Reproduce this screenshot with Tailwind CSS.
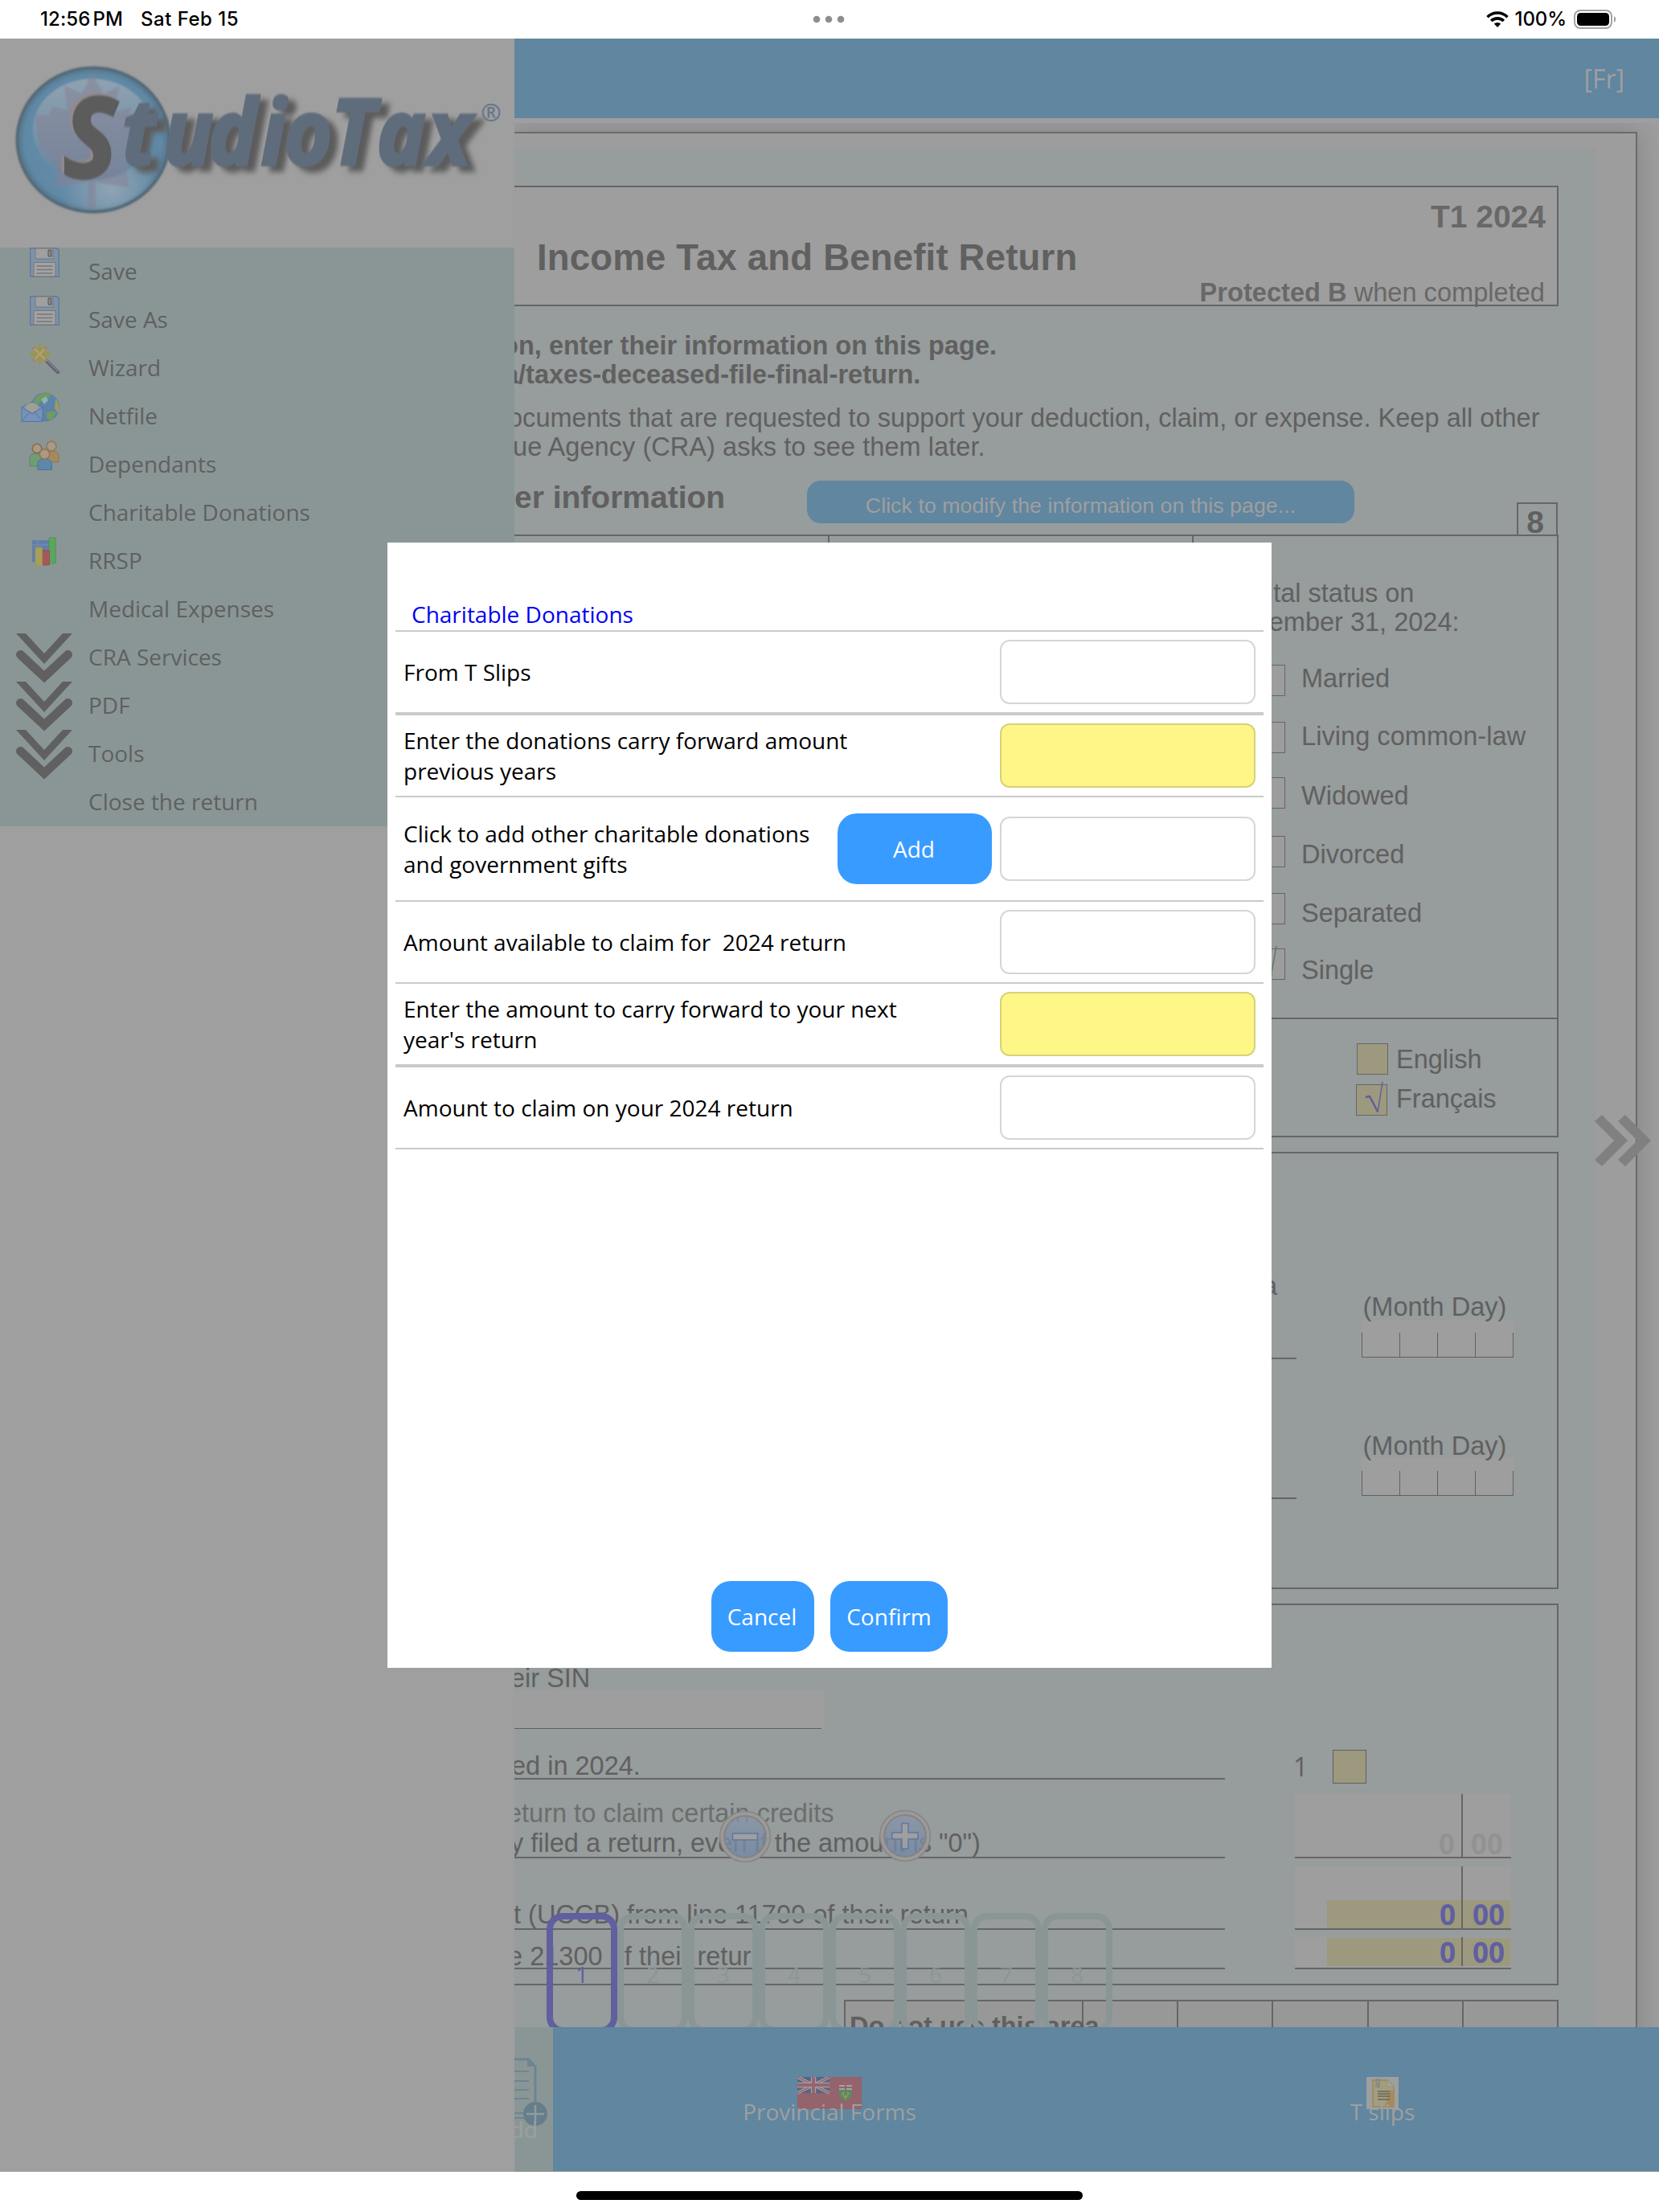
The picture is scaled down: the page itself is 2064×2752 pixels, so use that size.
<!DOCTYPE html>
<html lang="en">
<head>
    <meta charset="UTF-8">
    <title>StudioTax</title>
    <script src="https://cdn.jsdelivr.net/npm/@tailwindcss/browser@4"></script>
</head>
<body class="w-[2064px] h-[2752px] overflow-hidden bg-white relative flex flex-col font-['Open_Sans','Noto_Sans',sans-serif] text-[28px] leading-[38px] text-[#606060]">

<!-- Status bar -->
<header class="h-12 shrink-0 flex items-center justify-between pl-[50px] pr-[53px] text-black font-['Inter',sans-serif] font-medium text-[24px] leading-[30px]">
    <div class="flex w-[600px] gap-[22px] whitespace-nowrap">
        <span class="tracking-[0.1px]">12:56<span class="ml-[3px]">PM</span></span>
        <span class="tracking-[0.5px]">Sat Feb 15</span>
    </div>
    <svg class="w-[42px] h-[10px]" viewBox="0 0 42 10" fill="#8e8e8e"><circle cx="6" cy="5" r="4.3"/><circle cx="21" cy="5" r="4.3"/><circle cx="36" cy="5" r="4.3"/></svg>
    <div class="flex w-[600px] justify-end items-center">
        <svg class="w-[28px] h-[20px] mr-2" viewBox="0 0 28 20">
            <g fill="none" stroke="#000" stroke-width="3.6"><path d="M1.5 7.2a17.8 17.8 0 0 1 25 0"/><path d="M6.2 12a11.2 11.2 0 0 1 15.6 0"/></g>
            <path d="M14 20l-4.2-4.4a6 6 0 0 1 8.400 0z"/>
        </svg>
        <span class="tracking-[-0.1px]">100%</span>
        <svg class="w-[53px] h-[24px] ml-[9px]" viewBox="0 0 53 24">
            <rect x="1" y="1" width="46" height="22" rx="7" fill="none" stroke="#a3a3a3" stroke-width="2"/>
            <rect x="4" y="4" width="40" height="16" rx="4.500" fill="#000"/>
            <path d="M50 8v8c3-1.500 3-6.500 0-8z" fill="#a3a3a3"/>
        </svg>
    </div>
</header>

<div class="h-[2654px] shrink-0 flex">

    <!-- Side menu -->
    <aside class="w-[640px] shrink-0 bg-[#9f9f9f]">
        <svg class="block w-[640px] h-[260px]" viewBox="0 0 640 260">
            <defs>
                <radialGradient id="ball" cx=".5" cy=".5" r=".5"><stop offset="0" stop-color="#6d90a8"/><stop offset=".9" stop-color="#5f89a6"/><stop offset=".97" stop-color="#587990"/><stop offset="1" stop-color="#4f6472"/></radialGradient>
                <radialGradient id="glow" cx=".62" cy=".85" r=".35"><stop offset="0" stop-color="#90a3b3"/><stop offset="1" stop-color="#90a3b3" stop-opacity="0"/></radialGradient>
                <linearGradient id="shine" x1="0" y1="0" x2="0" y2="1"><stop offset="0" stop-color="#90a2b1"/><stop offset="1" stop-color="#6587a0"/></linearGradient>
                <filter id="soft" x="-10%" y="-20%" width="120%" height="150%"><feGaussianBlur stdDeviation="3.5"/></filter>
                <filter id="edge"><feGaussianBlur stdDeviation="0.8"/></filter>
            </defs>
            <g filter="url(#edge)">
                <ellipse cx="116" cy="126" rx="95" ry="90" fill="url(#ball)" stroke="#526673" stroke-width="3"/>
                <ellipse cx="116" cy="126" rx="92" ry="87" fill="url(#glow)"/>
                <ellipse cx="115" cy="113" rx="74" ry="63" fill="url(#shine)"/>
                <path d="M114 42l15 27 19-10-5 33 20-7-3 22 22 0-2 32-23 16 3 30-41-6v33h-10v-33l-42 6 4-26-22-24-6-40 18 0 5-11 18 6-4-32 22 11z" fill="#857f93" opacity=".5"/>
            </g>
            <g font-family="Open Sans, sans-serif" font-weight="700" font-style="italic" transform="scale(.9 1)">
                <text x="180 237 299 372 404 469 532 602" y="164" font-size="113" fill="#5c5c5c" stroke="#5c5c5c" stroke-width="4" filter="url(#soft)">tudioTax</text>
                <g filter="url(#edge)">
                    <text x="169 226 288 361 393 458 521 591" y="157" font-size="113" fill="#5f6c7c" stroke="#5f6c7c" stroke-width="4">tudioTax</text>
                    <text x="84" y="170" font-size="138" fill="#93898a" stroke="#93898a" stroke-width="3">S</text>
                    <text x="88" y="173" font-size="138" fill="#5b5b5b" stroke="#5b5b5b" stroke-width="4">S</text>
                </g>
            </g>
            <text x="598" y="103" font-family="Open Sans, sans-serif" font-size="31" font-weight="700" fill="#69788a">®</text>
        </svg>
        <nav class="bg-[#8a9696]">
            <ul>
                <li class="h-[60px] flex">
                    <div class="w-[110px] h-[60px] pl-[37px] shrink-0">
                        <svg class="w-[37px] h-[37px]" viewBox="0 0 37 37"><path d="M.7.7h33L36.300 3v33.300H.7z" fill="#7d93aa" stroke="#627a96" stroke-width="1.400"/><path d="M7 1h22v13H7z" fill="#a0a0a0" stroke="#777"/><path d="M23 3h4v8h-4z" fill="#868686" stroke="#555"/><path d="M5 18.500h27V36H5z" fill="#a3a3a3" stroke="#777"/><path d="M8.500 23h20M8.500 27.500h20M8.500 32h20" stroke="#777" stroke-width="1.400"/></svg>
                    </div><span class="pt-[10px]">Save</span>
                </li>
                <li class="h-[60px] flex">
                    <div class="w-[110px] h-[60px] pl-[37px] shrink-0">
                        <svg class="w-[37px] h-[37px]" viewBox="0 0 37 37"><path d="M.7.7h33L36.300 3v33.300H.7z" fill="#7d93aa" stroke="#627a96" stroke-width="1.400"/><path d="M7 1h22v13H7z" fill="#a0a0a0" stroke="#777"/><path d="M23 3h4v8h-4z" fill="#868686" stroke="#555"/><path d="M5 18.500h27V36H5z" fill="#a3a3a3" stroke="#777"/><path d="M8.500 23h20M8.500 27.500h20M8.500 32h20" stroke="#777" stroke-width="1.400"/></svg>
                    </div><span class="pt-[10px]">Save As</span>
                </li>
                <li class="h-[60px] flex">
                    <div class="w-[110px] h-[60px] pl-[37px] shrink-0">
                        <svg class="w-[37px] h-[37px]" viewBox="0 0 37 37" stroke-linecap="round"><path d="M19 19l16 16" stroke="#5f5f6c" stroke-width="4.500"/><path d="M20 19l15 15" stroke="#8a7f9a" stroke-width="1.500"/><path d="M12.500 2v22M2 12.500h22" stroke="#98974a" stroke-width="4"/><path d="M5.500 5.500l14 14M19.500 5.500l-14 14" stroke="#a58a52" stroke-width="5"/><path d="M7 7l11 11M18 7L7 18" stroke="#aaa26e" stroke-width="3"/></svg>
                    </div><span class="pt-[10px]">Wizard</span>
                </li>
                <li class="h-[60px] flex">
                    <div class="w-[110px] h-[60px] pl-[26px] shrink-0">
                        <svg class="w-[48px] h-[37px]" viewBox="0 0 48 37"><circle cx="30" cy="18.500" r="18" fill="#5c83a8"/><path d="M17 8C22 1 33-1 38 2l-4 6-8 1-5 8-6 1zM32 25l9-2 3 3-7 10-5-4z" fill="#6f9a62"/><path d="M43 8q7 8 3 18l-4-6z" fill="#9d9a5c"/><path d="M25 9l6-4 3 5-5 5z" fill="#8fb0b8"/><path d="M1 18.500l13-6.500 13 6.500V36.500H1z" fill="#7593b8" stroke="#5673a0"/><path d="M6 17q8-8 16 0v4l-8 4-8-4z" fill="#a09f94"/><path d="M1 36l10-11M27 36L17 25M1 18.500L14 27l13-8.500" fill="none" stroke="#5673a0"/></svg>
                    </div><span class="pt-[10px]">Netfile</span>
                </li>
                <li class="h-[60px] flex">
                    <div class="w-[110px] h-[60px] pl-[36px] shrink-0">
                        <svg class="w-[38px] h-[37px]" viewBox="0 0 38 37"><path d="M22 27V17q1-4 6-4 9 0 9 6v8z" fill="#a28a5f" stroke="#92784c"/><circle cx="28" cy="7" r="6" fill="#a89a85" stroke="#917555" stroke-width="1.500"/><path d="M1 32V22q0-5 7-6 8 0 9 6v10z" fill="#6f9c73" stroke="#5b8a60"/><circle cx="10" cy="10" r="5.700" fill="#a89a85" stroke="#8a6a45" stroke-width="1.500"/><path d="M11 36.500V29q0-6 8.500-6t9 6v7.500z" fill="#5f86ab" stroke="#4d729a"/><circle cx="19.500" cy="17" r="6.200" fill="#a89a85" stroke="#917555" stroke-width="1.500"/></svg>
                    </div><span class="pt-[10px]">Dependants</span>
                </li>
                <li class="h-[60px] pt-[10px] pl-[110px]">Charitable Donations</li>
                <li class="h-[60px] flex">
                    <div class="w-[110px] h-[60px] pl-[40px] shrink-0">
                        <svg class="w-[30px] h-[36px]" viewBox="0 0 30 36"><path d="M0 4h21v30L0 31z" fill="#617fa6"/><path d="M0 10h20M7 4v28" stroke="#7692b4"/><rect x="21" y="1" width="8.500" height="32" rx="1" fill="#5ba561" stroke="#519457"/><rect x="12.500" y="17" width="9" height="18" rx="1" fill="#a5585c" stroke="#965055"/><rect x="4" y="13" width="8.500" height="23" rx="1" fill="#a7a05c" stroke="#999150"/></svg>
                    </div><span class="pt-[10px]">RRSP</span>
                </li>
                <li class="h-[60px] pt-[10px] pl-[110px]">Medical Expenses</li>
                <li class="h-[60px] flex">
                    <div class="w-[110px] h-[60px] pl-5 shrink-0">
                        <svg class="w-[70px] h-[63px]" viewBox="0 0 70 63"><path d="M0 0h12l23 25L58 0h12L35 38z" fill="#606060"/><path d="M5.500 26.500L35 54l29.500-27.500" fill="none" stroke="#606060" stroke-width="11" stroke-linecap="round"/></svg>
                    </div><span class="pt-[10px]">CRA Services</span>
                </li>
                <li class="h-[60px] flex">
                    <div class="w-[110px] h-[60px] pl-5 shrink-0">
                        <svg class="w-[70px] h-[63px]" viewBox="0 0 70 63"><path d="M0 0h12l23 25L58 0h12L35 38z" fill="#606060"/><path d="M5.500 26.500L35 54l29.500-27.500" fill="none" stroke="#606060" stroke-width="11" stroke-linecap="round"/></svg>
                    </div><span class="pt-[10px]">PDF</span>
                </li>
                <li class="h-[60px] flex">
                    <div class="w-[110px] h-[60px] pl-5 shrink-0">
                        <svg class="w-[70px] h-[63px]" viewBox="0 0 70 63"><path d="M0 0h12l23 25L58 0h12L35 38z" fill="#606060"/><path d="M5.500 26.500L35 54l29.500-27.500" fill="none" stroke="#606060" stroke-width="11" stroke-linecap="round"/></svg>
                    </div><span class="pt-[10px]">Tools</span>
                </li>
                <li class="h-[60px] pt-[10px] pl-[110px]">Close the return</li>
            </ul>
        </nav>
    </aside>

    <!-- Return -->
    <main class="w-[1424px] shrink-0 flex flex-col relative bg-[#9f9f9f] overflow-hidden">
        <div class="h-[99px] shrink-0 bg-[#6086a0] flex items-center justify-end pr-[43px] text-[32px] text-[#9f9f9f]">[Fr]</div>
        <div class="h-[6px] shrink-0"></div>

        <div class="h-[2369px] shrink-0 overflow-hidden pt-[11px]">
            <div class="w-[1397px] h-[2500px] pt-[19px] bg-[#9d9d9d] border-t-2 border-r-2 border-[#6a6a6a] shadow-[0_0_34px_6px_rgba(0,0,0,0.14)]">
                <div class="w-[1345px] h-[2480px] pt-[46px] bg-[#979c9c] font-['Liberation_Sans',sans-serif] text-[32.5px] leading-[36px] whitespace-nowrap">

                    <!-- Title box -->
                    <div class="w-[1299px] h-[150px] bg-[#9e9e9e] border-y-2 border-r-2 border-[#666]">
                        <p class="pt-[15px] pr-[14px] text-right font-bold text-[39px] leading-[44px] text-[#686868]">T1 2024</p>
                        <h1 class="pt-[4px] pl-[28px] font-bold text-[45.5px] leading-[50px] tracking-[0.2px]">Income Tax and Benefit Return</h1>
                        <p class="pr-[15px] text-right text-[#686868] tracking-[0.05px]"><b>Protected B</b> when completed</p>
                    </div>

                    <p class="mt-[31px] -ml-[15px] font-bold tracking-[0.03px]">on, enter their information on this page.</p>
                    <p class="-ml-[13px] font-bold">a/taxes-deceased-file-final-return.</p>
                    <p class="mt-[18px] -ml-[8px] tracking-[0.03px]">ocuments that are requested to support your deduction, claim, or expense. Keep all other</p>
                    <p class="-ml-[2px] tracking-[0.06px]">ue Agency (CRA) asks to see them later.</p>

                    <div class="h-[69px] mt-[22px] flex items-start">
                        <h2 class="w-[364px] pt-px font-bold text-[39px] leading-[44px]">er information</h2>
                        <div class="w-[681px] h-[53px] mt-[2px] rounded-[17px] bg-[#6086a0] text-center text-[26.7px] leading-[62px] tracking-[0.06px] text-[#9f9f9f]">Click to modify the information on this page...</div>
                        <div class="w-[51px] h-[40px] ml-[202px] mt-[29px] pr-[5px] border-2 border-b-0 border-[#666] text-center font-bold text-[39px] leading-[46px]">8</div>
                    </div>

                    <!-- Marital status and language -->
                    <div class="w-[1299px] h-[750px] border-y-2 border-r-2 border-[#666]">
                        <div class="h-[601px] flex border-b-2 border-[#666]">
                            <div class="w-[392px] border-r-2 border-[#666]"></div>
                            <div class="w-[453px] border-r-2 border-[#666]"></div>
                            <div class="pt-[53px] pl-[36px]">
                                <p>Marital status on</p>
                                <p>December 31, 2024:</p>
                                <div class="mt-[35px] ml-[39px]">
                                    <div class="flex h-[71px]"><span class="w-[39px] h-[39px] mr-[20px] border border-[#666] bg-[#9d9d9d]"></span><span class="-mt-px">Married</span></div>
                                    <div class="flex h-[69px]"><span class="w-[39px] h-[39px] mr-[20px] border border-[#666] bg-[#9d9d9d]"></span><span class="tracking-[0.06px]">Living common-law</span></div>
                                    <div class="flex h-[73px]"><span class="w-[39px] h-[39px] mr-[20px] border border-[#666] bg-[#9d9d9d]"></span><span class="pt-[5px]">Widowed</span></div>
                                    <div class="flex h-[71px]"><span class="w-[39px] h-[39px] mr-[20px] border border-[#666] bg-[#9d9d9d]"></span><span class="pt-[5px]">Divorced</span></div>
                                    <div class="flex h-[69px]"><span class="w-[39px] h-[39px] mr-[20px] border border-[#666] bg-[#9d9d9d]"></span><span class="pt-[7px]">Separated</span></div>
                                    <div class="flex h-[50px]">
                                        <span class="w-[39px] h-[39px] mr-[20px] border border-[#666] bg-[#9d9d9d]"><svg class="w-[37px] h-[37px] overflow-visible" viewBox="0 0 37 37" fill="none" stroke="#5b8060"><path d="M11 19l4-2 6 17" stroke-width="2.500"/><path d="M20 34l7-38" stroke-width="1.500"/></svg></span>
                                        <span class="pt-[9px]">Single</span>
                                    </div>
                                </div>
                            </div>
                        </div>
                        <div class="pt-[30px] pl-[1047px]">
                            <div class="flex h-[51px] pl-px"><span class="w-[39px] h-[39px] mr-[10px] border border-[#666] bg-[#9c997e]"></span><span class="pt-[2px]">English</span></div>
                            <div class="flex">
                                <span class="w-[39px] h-[39px] mr-[11px] border border-[#666] bg-[#9c997e]"><svg class="w-[37px] h-[37px] overflow-visible" viewBox="0 0 37 37" fill="none" stroke="#605f9f"><path d="M11 15l5-1 10 19" stroke-width="2.500"/><path d="M26 34l6-38" stroke-width="1.500"/></svg></span>
                                <span>Français</span>
                            </div>
                        </div>
                    </div>

                    <!-- Residence dates -->
                    <div class="w-[1299px] h-[544px] mt-[18px] border-y-2 border-r-2 border-[#666]">
                        <div class="h-[256px] flex">
                            <div class="w-[973px] pt-[147px] pr-[24px] border-b-2 border-[#666] text-right">a</div>
                            <div class="w-[190px] ml-[81px] pt-[173px]">
                                <p class="pl-[1.5px]">(Month Day)</p>
                                <div class="flex items-end h-[47px] -mt-[2px] bg-[#9e9e9e]"><div class="flex h-[31px] border-b border-r border-[#606060]"><i class="w-[47px] border-l border-[#606060]"></i><i class="w-[47px] border-l border-[#606060]"></i><i class="w-[47px] border-l border-[#606060]"></i><i class="w-[47px] border-l border-[#606060]"></i></div></div>
                            </div>
                        </div>
                        <div class="h-[174px] flex">
                            <div class="w-[973px] border-b-2 border-[#666]"></div>
                            <div class="w-[190px] ml-[81px] pt-[90px]">
                                <p class="pl-[1.5px]">(Month Day)</p>
                                <div class="flex items-end h-[47px] -mt-[3px] bg-[#9e9e9e]"><div class="flex h-[31px] border-b border-r border-[#606060]"><i class="w-[47px] border-l border-[#606060]"></i><i class="w-[47px] border-l border-[#606060]"></i><i class="w-[47px] border-l border-[#606060]"></i><i class="w-[47px] border-l border-[#606060]"></i></div></div>
                            </div>
                        </div>
                    </div>

                    <!-- Spouse information -->
                    <div class="w-[1299px] h-[475px] mt-[18px] border-y-2 border-r-2 border-[#666]">
                        <p class="pt-[73px] -ml-[5px]">eir SIN</p>
                        <div class="w-[385px] h-[48px] -mt-[3px] bg-[#9e9e9e] pr-[3px]"><div class="h-full border-b border-[#606060]"></div></div>
                        <div class="h-[63px] flex">
                            <div class="w-[884px] pt-[28px] border-b-2 border-[#666]"><p class="-ml-[4px]">ed in 2024.</p></div>
                            <div class="ml-[85px] w-[49px] pt-[29px] font-['Open_Sans',sans-serif] text-[32px]">1</div>
                            <div class="w-[42px] h-[42px] mt-[26px] border border-[#606060] bg-[#9c997e]"></div>
                        </div>
                        <div class="h-[98px] flex">
                            <div class="w-[884px] pt-[24px] border-b-2 border-[#666]"><p class="-ml-[9px] leading-[37px] text-[#6c6e6e]">eturn to claim certain credits</p><p class="-ml-[5px] leading-[37px]">y filed a return, even if the amount is "0")</p></div>
                            <div class="w-[269px] ml-[87px] mt-[18px] flex items-end bg-[#9e9e9e] border-b-2 border-[#666] font-['Open_Sans',sans-serif] font-bold text-[35px] leading-[36px] text-[#929292]">
                                <span class="w-[209px] h-full pt-[44px] pr-[8px] border-r-2 border-[#666] text-right">0</span><span class="h-[34px] pl-[10px]">00</span>
                            </div>
                        </div>
                        <div class="h-[89px] flex">
                            <div class="w-[884px] pt-[52px] border-b-2 border-[#666]"><p class="-ml-px tracking-[0.03px]">t (UCCB) from line 11700 of their return</p></div>
                            <div class="w-[269px] ml-[87px] mt-[10px] flex items-end bg-[#9e9e9e] border-b-2 border-[#666] font-['Open_Sans',sans-serif] font-bold text-[35px] leading-[35px] text-[#605f9f]">
                                <span class="w-[209px] h-full pl-[40px] border-r-2 border-[#666] text-right flex flex-col justify-end"><span class="bg-[#9c997e] pr-[7px]">0</span></span><span class="w-[59px] bg-[#9c997e] pl-[12px]">00</span>
                            </div>
                        </div>
                        <div class="h-[49px] flex">
                            <div class="w-[884px] pt-[15px] border-b-2 border-[#666]"><p class="-ml-[8px] h-[30px] tracking-[0.03px] [font-kerning:none]">e 21300 of their return</p></div>
                            <div class="w-[269px] ml-[87px] mt-[9px] pb-[2px] flex items-end bg-[#9e9e9e] border-b-2 border-[#666] font-['Open_Sans',sans-serif] font-bold text-[35px] leading-[35px] text-[#605f9f]">
                                <span class="w-[209px] h-full pl-[40px] border-r-2 border-[#666] text-right flex flex-col justify-end"><span class="bg-[#9c997e] pr-[7px]">0</span></span><span class="w-[59px] bg-[#9c997e] pl-[12px]">00</span>
                            </div>
                        </div>
                    </div>

                    <div class="w-[889px] h-[70px] ml-[410px] mt-[18px] flex bg-[#989898] border-2 border-[#666]">
                        <div class="w-[296px] pt-[13px] pl-[5px] border-r-2 border-[#666] font-bold">Do not use this area</div>
                        <div class="w-[118px] border-r-2 border-[#666]"></div>
                        <div class="w-[118px] border-r-2 border-[#666]"></div>
                        <div class="w-[119px] border-r-2 border-[#666]"></div>
                        <div class="w-[118px] border-r-2 border-[#666]"></div>
                    </div>
                </div>
            </div>
        </div>

        <!-- Next page arrow -->
        <svg class="absolute left-[1344px] top-[1338px] w-[70px] h-[66px]" viewBox="0 0 70 66" fill="#808080"><path d="M0 9l9-8 32 32L9 65l-9-8 24-24z"/><path d="M29 9l9-8 32 32-32 32-9-8 24-24z"/></svg>

        <!-- Zoom buttons -->
        <svg class="absolute left-[255px] top-[2204px] w-[64px] h-[66px]" viewBox="0 0 64 66">
            <defs><linearGradient id="zoomFill" x1="0" y1="0" x2="0" y2="1"><stop offset="0" stop-color="#8a96a8"/><stop offset="1" stop-color="#7087a6"/></linearGradient></defs>
            <circle cx="32" cy="33" r="27" fill="url(#zoomFill)" fill-opacity=".78"/>
            <circle cx="32" cy="33" r="28.500" fill="none" stroke="#828282" stroke-width="7"/><circle cx="32" cy="33" r="28.700" fill="none" stroke="#9b9a98" stroke-width="4"/>
            <rect x="16.500" y="29" width="31" height="8" fill="#9f9f9f" stroke="#5f78a0" stroke-width="1.500"/>
        </svg>
        <svg class="absolute left-[454px] top-[2203px] w-[64px] h-[66px]" viewBox="0 0 64 66">
            <circle cx="32" cy="33" r="27" fill="url(#zoomFill)" fill-opacity=".78"/>
            <circle cx="32" cy="33" r="28.500" fill="none" stroke="#828282" stroke-width="7"/><circle cx="32" cy="33" r="28.700" fill="none" stroke="#9b9a98" stroke-width="4"/>
            <path d="M28 17.500h8v11.500h12v8h-12v12h-8v-12h-12v-8h12z" fill="#9f9f9f" stroke="#5f78a0" stroke-width="1.500"/>
        </svg>

        <!-- Page tabs -->
        <div class="absolute left-[40px] top-[2332px] h-[142px] overflow-hidden flex text-[28px] text-[#8a9696] text-center leading-[38px]">
            <div class="w-[88px] h-[150px] pt-[49px] border-8 rounded-[20px] border-[#605f9f] text-[#605f9f]">1</div>
            <div class="w-[88px] h-[150px] pt-[49px] border-8 rounded-[20px] border-[#8a9696]">2</div>
            <div class="w-[88px] h-[150px] pt-[49px] border-8 rounded-[20px] border-[#8a9696]">3</div>
            <div class="w-[88px] h-[150px] pt-[49px] border-8 rounded-[20px] border-[#8a9696]">4</div>
            <div class="w-[88px] h-[150px] pt-[49px] border-8 rounded-[20px] border-[#8a9696]">5</div>
            <div class="w-[88px] h-[150px] pt-[49px] border-8 rounded-[20px] border-[#8a9696]">6</div>
            <div class="w-[88px] h-[150px] pt-[49px] border-8 rounded-[20px] border-[#8a9696]">7</div>
            <div class="w-[88px] h-[150px] pt-[49px] border-8 rounded-[20px] border-[#8a9696]">8</div>
        </div>

        <!-- Bottom tabs -->
        <div class="h-[180px] shrink-0 flex border-b border-[#8f8f8f] text-[#9f9f9f]">
            <div class="w-12 shrink-0 overflow-hidden bg-[#8a9696] pt-[34px]">
                <svg class="block w-12 h-[90px]" viewBox="0 0 48 90" fill="none" stroke="#6e8490" stroke-width="3">
                    <path d="M0 6h18l8 9v46"/><path d="M16 5l11 10H16z" fill="#6e8490" stroke="none"/><path d="M0 21h18M0 33h18M0 44h18M0 55h18M0 73h13M0 79h13" stroke-width="2"/>
                    <circle cx="26" cy="74" r="15" fill="#667d8b" stroke="none"/><path d="M26 63v22M15 74h22" stroke="#8f9c9e" stroke-width="2.500"/>
                </svg>
                <p class="-ml-[23px] -mt-[16px] relative">Add</p>
            </div>
            <div class="w-[688px] shrink-0 bg-[#6086a0] pt-[62px] flex flex-col items-center">
                <svg class="w-20 h-10" viewBox="0 0 80 40">
                    <path d="M0 0h80v40H0z" fill="#94636b"/><path d="M0 0h40v20H0z" fill="#536584"/><path d="M0 0l40 20M40 0L0 20" stroke="#a09ba3" stroke-width="4"/><path d="M0 0l40 20M40 0L0 20" stroke="#98636e" stroke-width="1.500"/><path d="M20 0v20M0 10h40" stroke="#a39da5" stroke-width="6.500"/><path d="M20 0v20M0 10h40" stroke="#98636e" stroke-width="3.800"/>
                    <path d="M52 10h16v10q0 7-8 10-8-3-8-10z" fill="#5c8a64"/><path d="M52 10h16v6H52z" fill="#a3a3a3"/><path d="M60 10v6M52 13h16" stroke="#94636b" stroke-width="2"/><path d="M55 21l3-3v5zM65 21l-3-3v5zM60 28l-3-5h6z" fill="#9c9654"/>
                </svg>
                <p class="-mt-[16px] relative">Provincial Forms</p>
            </div>
            <div class="w-[688px] shrink-0 bg-[#6086a0] pt-[62px] flex flex-col items-center">
                <svg class="w-10 h-10" viewBox="0 0 40 40">
                    <path d="M0 0h40v40H0z" fill="#9f9f9f"/><path d="M8 4h18l8 8v25H8z" fill="#a39d80" stroke="#98895c" stroke-width="1.500"/><path d="M29 17h5v19H23z" fill="#a58a5e"/><path d="M26 4v8h8z" fill="#a5a595" stroke="#8f9a70"/><path d="M14 18h15M14 21h15M14 24h15M14 28h15" stroke="#6b6454" stroke-width="1.400"/><path d="M12 13V4q2-3 4 0v8q-1 3-2 0V6" fill="none" stroke="#7d8388" stroke-width="1.200"/>
                </svg>
                <p class="-mt-[16px] relative">T slips</p>
            </div>
        </div>
    </main>
</div>

<!-- Home indicator -->
<footer class="h-[50px] shrink-0 flex justify-center pt-[24px]">
    <div class="w-[630px] h-[11px] rounded-full bg-black"></div>
</footer>

<!-- Charitable donations dialog -->
<div class="absolute left-[482px] top-[675px] w-[1100px] h-[1400px] bg-white px-[10px] pb-[20px] flex flex-col text-black">
    <h3 class="h-[111px] pt-[70px] pl-[20px] border-b-2 border-[#cacaca] text-[#0000f5]">Charitable Donations</h3>
    <div class="h-[104px] px-[10px] flex items-center justify-between border-b-4 border-[#cacaca]">
        <p>From T Slips</p>
        <div class="w-[318px] h-[80px] rounded-xl border-2 border-[#d6d6d6]"></div>
    </div>
    <div class="h-[102px] px-[10px] flex items-center justify-between border-b-2 border-[#cacaca]">
        <p>Enter the donations carry forward amount<br>previous years</p>
        <div class="w-[318px] h-[80px] rounded-xl border-2 border-[#d8d177] bg-[#fff688]"></div>
    </div>
    <div class="h-[130px] px-[10px] flex items-center border-b-2 border-[#cacaca]">
        <p class="flex-1">Click to add other charitable donations<br>and government gifts</p>
        <button class="w-[192px] h-[88px] mr-[10px] pr-[2px] rounded-[24px] bg-[#389bff] text-white">Add</button>
        <div class="w-[318px] h-[80px] rounded-xl border-2 border-[#d6d6d6]"></div>
    </div>
    <div class="h-[102px] px-[10px] flex items-center justify-between border-b-2 border-[#cacaca]">
        <p class="whitespace-pre">Amount available to claim for  2024 return</p>
        <div class="w-[318px] h-[80px] rounded-xl border-2 border-[#d6d6d6]"></div>
    </div>
    <div class="h-[104px] px-[10px] flex items-center justify-between border-b-4 border-[#cacaca]">
        <p>Enter the amount to carry forward to your next<br>year's return</p>
        <div class="w-[318px] h-[80px] rounded-xl border-2 border-[#d8d177] bg-[#fff688]"></div>
    </div>
    <div class="h-[102px] px-[10px] flex items-center justify-between border-b-2 border-[#cacaca]">
        <p>Amount to claim on your 2024 return</p>
        <div class="w-[318px] h-[80px] rounded-xl border-2 border-[#d6d6d6]"></div>
    </div>
    <div class="mt-auto flex justify-center gap-5 text-white">
        <button class="w-[128px] h-[88px] pr-[2px] rounded-[24px] bg-[#389bff]">Cancel</button>
        <button class="w-[146px] h-[88px] rounded-[24px] bg-[#389bff]">Confirm</button>
    </div>
</div>

</body>
</html>
